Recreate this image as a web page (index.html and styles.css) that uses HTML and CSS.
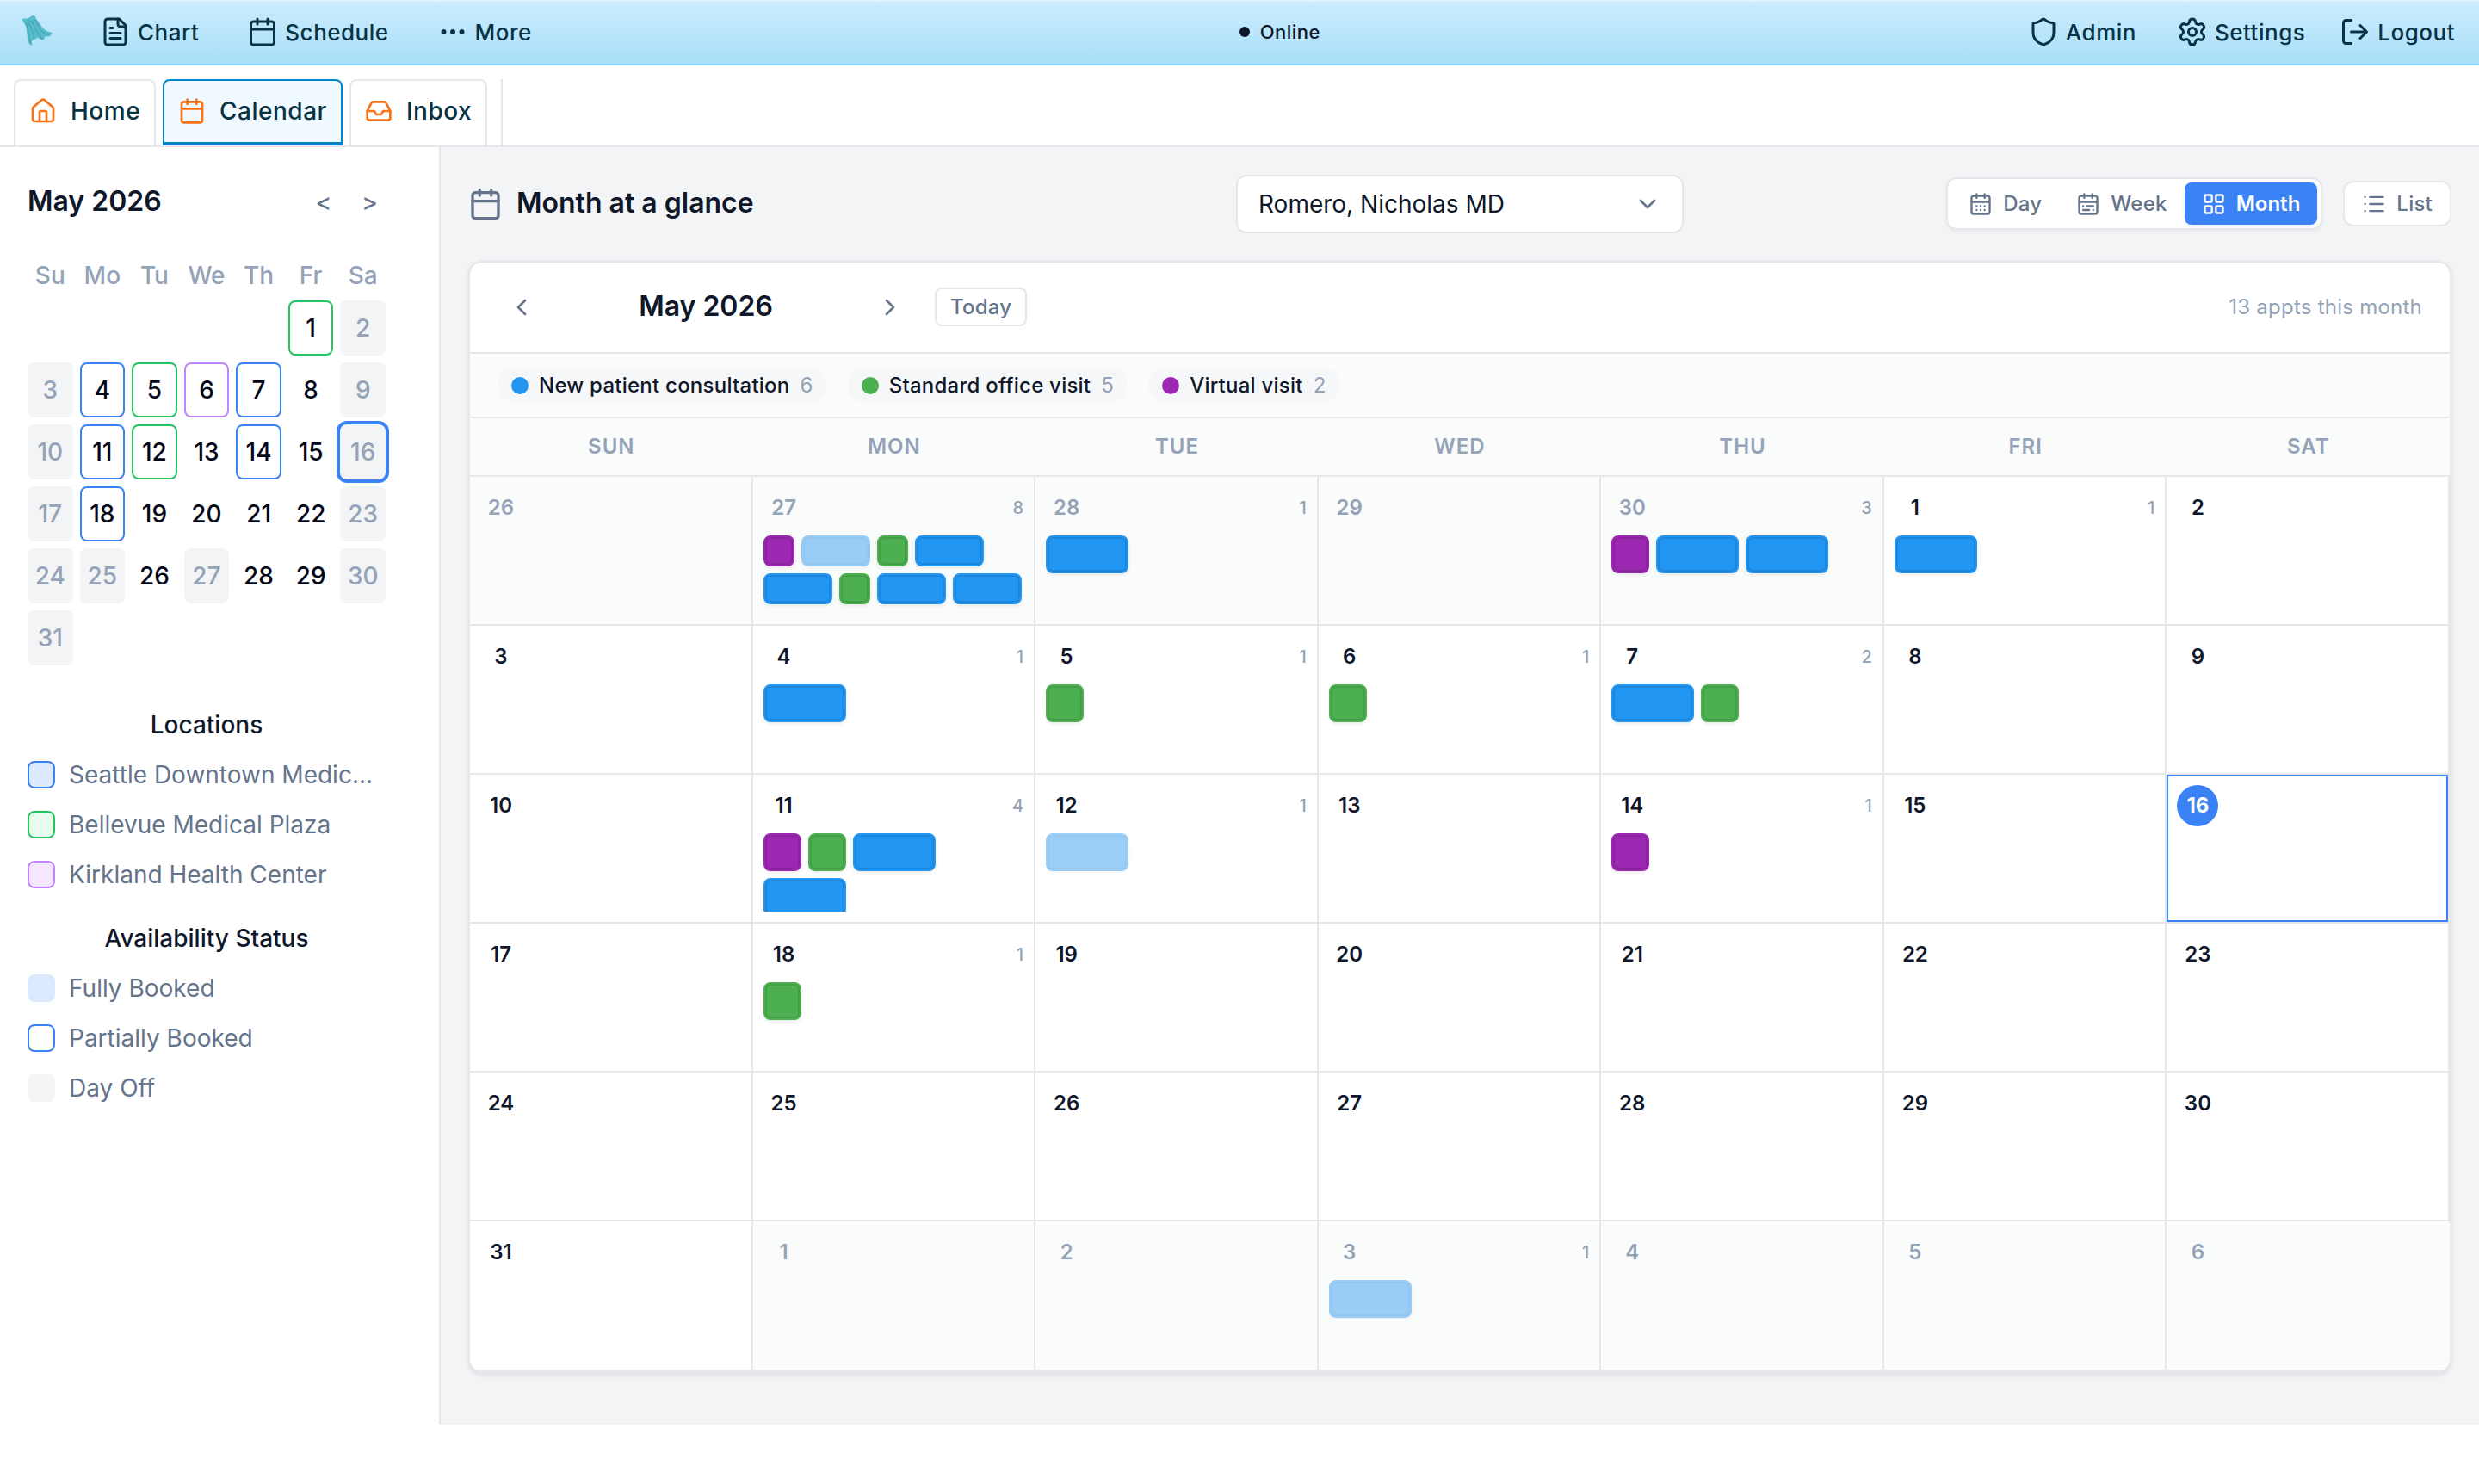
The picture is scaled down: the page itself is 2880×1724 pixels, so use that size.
FILE: index.html
```html
<!DOCTYPE html>
<html lang="en">
<head>
    <meta charset="UTF-8">
    <meta name="viewport" content="width=device-width, initial-scale=1.0">
    <title>Calendar</title>
    <link rel="stylesheet" href="styles.css">
</head>
<body>
    <!-- Shared icons -->
    <svg width="0" height="0" class="sprite">
        <symbol id="calendar" viewBox="0 0 24 24"><path d="M8 2v4M16 2v4M3 10h18"/><rect x="3" y="4" width="18" height="18" rx="2"/></symbol>
        <symbol id="file" viewBox="0 0 24 24"><path d="M15 2H6a2 2 0 0 0-2 2v16a2 2 0 0 0 2 2h12a2 2 0 0 0 2-2V7Z"/><path d="M14 2v4a2 2 0 0 0 2 2h4M10 9H8M16 13H8M16 17H8"/></symbol>
        <symbol id="dots" viewBox="0 0 24 24"><circle cx="12" cy="12" r="1"/><circle cx="19" cy="12" r="1"/><circle cx="5" cy="12" r="1"/></symbol>
        <symbol id="shield" viewBox="0 0 24 24"><path d="M20 13c0 5-3.500 7.500-7.660 8.950a1 1 0 0 1-.67-.01C7.500 20.500 4 18 4 13V6a1 1 0 0 1 1-1c2 0 4.500-1.200 6.240-2.720a1.170 1.170 0 0 1 1.520 0C14.510 3.810 17 5 19 5a1 1 0 0 1 1 1z"/></symbol>
        <symbol id="settings" viewBox="0 0 24 24"><path d="M9.671 4.136a2.340 2.340 0 0 1 4.659 0 2.340 2.340 0 0 0 3.319 1.915 2.340 2.340 0 0 1 2.330 4.033 2.340 2.340 0 0 0 0 3.831 2.340 2.340 0 0 1-2.330 4.033 2.340 2.340 0 0 0-3.319 1.915 2.340 2.340 0 0 1-4.659 0 2.340 2.340 0 0 0-3.320-1.915 2.340 2.340 0 0 1-2.330-4.033 2.340 2.340 0 0 0 0-3.831A2.340 2.340 0 0 1 6.350 6.051a2.340 2.340 0 0 0 3.319-1.915"/><circle cx="12" cy="12" r="3"/></symbol>
        <symbol id="logout" viewBox="0 0 24 24"><path d="M9 21H5a2 2 0 0 1-2-2V5a2 2 0 0 1 2-2h4M16 17l5-5-5-5M21 12H9"/></symbol>
        <symbol id="home" viewBox="0 0 24 24"><path d="M15 21v-8a1 1 0 0 0-1-1h-4a1 1 0 0 0-1 1v8"/><path d="M3 10a2 2 0 0 1 .709-1.528l7-5.999a2 2 0 0 1 2.582 0l7 5.999A2 2 0 0 1 21 10v9a2 2 0 0 1-2 2H5a2 2 0 0 1-2-2z"/></symbol>
        <symbol id="inbox" viewBox="0 0 24 24"><path d="M22 12h-6l-2 3h-4l-2-3H2"/><path d="M5.450 5.110 2 12v6a2 2 0 0 0 2 2h16a2 2 0 0 0 2-2v-6l-3.450-6.890A2 2 0 0 0 16.760 4H7.240a2 2 0 0 0-1.790 1.110z"/></symbol>
        <symbol id="day" viewBox="0 0 24 24"><path d="M8 2v4M16 2v4M3 10h18M8 14h.01M12 14h.01M16 14h.01M8 18h.01M12 18h.01M16 18h.01"/><rect x="3" y="4" width="18" height="18" rx="2"/></symbol>
        <symbol id="week" viewBox="0 0 24 24"><path d="M8 2v4M16 2v4M3 10h18M17 14h-6M13 18H7M7 14h.01M17 18h.01"/><rect x="3" y="4" width="18" height="18" rx="2"/></symbol>
        <symbol id="grid" viewBox="0 0 24 24"><rect x="3" y="3" width="7" height="7" rx="1"/><rect x="14" y="3" width="7" height="7" rx="1"/><rect x="14" y="14" width="7" height="7" rx="1"/><rect x="3" y="14" width="7" height="7" rx="1"/></symbol>
        <symbol id="list" viewBox="0 0 24 24"><path d="M3 5h.01M3 12h.01M3 19h.01M8 5h13M8 12h13M8 19h13"/></symbol>
        <symbol id="left" viewBox="0 0 24 24"><path d="m15 18-6-6 6-6"/></symbol>
        <symbol id="right" viewBox="0 0 24 24"><path d="m9 18 6-6-6-6"/></symbol>
        <symbol id="down" viewBox="0 0 24 24"><path d="m6 9 6 6 6-6"/></symbol>
    </svg>

    <div class="topbar">
        <div class="nav">
            <svg class="logo" viewBox="0 0 40 40">
                <path d="M1.500 4.500C3 3 5 4 7 3.500c3 0 5-3 8-3.500 2 0 3 2 3.500 4 2 2 3.500 4.500 5.500 7.500 2 3 4 5 6.500 6.500 2 1.500 5 2 7.500 2.500-1 2-2.500 4-4.500 5l-4-1c-.5 2-1.500 4-3.500 5-2-.5-4-2-6-3-1 1-2 2-3.500 2-2 0-3 1.500-3.500 3.500l1 4c-2-.5-4-2-5.500-5C8 25 7.500 18 6 13 5 10 3 8 1.500 4.500z" fill="#58bccb"/>
                <path d="M8 5c3 3 7 3 10 0M6 8c4 7 3 15 6 26M9 8c5 7 5 12 7 19M14 8c3 8 6 14 12 20M18 7c3 7 8 13 14 17" fill="none" stroke="#45a5b6" stroke-width="1.200"/>
            </svg>
            <a class="nav-item"><svg class="icon"><use href="#file"/></svg>Chart</a>
            <a class="nav-item"><svg class="icon"><use href="#calendar"/></svg>Schedule</a>
            <a class="nav-item"><svg class="icon"><use href="#dots"/></svg>More</a>
        </div>
        <div class="online"><span class="online-dot"></span>Online</div>
        <div class="nav nav-right">
            <a class="nav-item admin"><svg class="icon"><use href="#shield"/></svg>Admin</a>
            <a class="nav-item"><svg class="icon"><use href="#settings"/></svg>Settings</a>
            <a class="nav-item"><svg class="icon"><use href="#logout"/></svg>Logout</a>
        </div>
    </div>

    <div class="tabs">
        <a class="tab"><svg class="icon"><use href="#home"/></svg><span>Home</span></a>
        <a class="tab active"><svg class="icon"><use href="#calendar"/></svg><span>Calendar</span></a>
        <a class="tab"><svg class="icon"><use href="#inbox"/></svg><span>Inbox</span></a>
        <span class="tab-divider"></span>
    </div>

    <div class="layout">
        <div class="sidebar">
            <div class="mini-header">
                <h2>May 2026</h2>
                <div class="mini-nav"><span>&lt;</span><span>&gt;</span></div>
            </div>
            <div class="mini-week">
                <span>Su</span><span>Mo</span><span>Tu</span><span>We</span><span>Th</span><span>Fr</span><span>Sa</span>
            </div>
            <div class="mini-days" id="miniDays"></div>

            <h3>Locations</h3>
            <div class="key"><span class="swatch seattle"></span><span class="key-name">Seattle Downtown Medic...</span></div>
            <div class="key"><span class="swatch bellevue"></span><span class="key-name">Bellevue Medical Plaza</span></div>
            <div class="key"><span class="swatch kirkland"></span><span class="key-name">Kirkland Health Center</span></div>
            <h3 class="status-title">Availability Status</h3>
            <div class="key"><span class="swatch full"></span><span class="key-name">Fully Booked</span></div>
            <div class="key"><span class="swatch partial"></span><span class="key-name">Partially Booked</span></div>
            <div class="key"><span class="swatch off"></span><span class="key-name">Day Off</span></div>
        </div>

        <div class="main">
            <div class="toolbar">
                <h1><svg class="icon"><use href="#calendar"/></svg><span>Month at a glance</span></h1>
                <div class="provider">Romero, Nicholas MD<svg class="icon"><use href="#down"/></svg></div>
                <div class="views">
                    <div class="view-group">
                        <button class="view"><svg class="icon"><use href="#day"/></svg>Day</button>
                        <button class="view"><svg class="icon"><use href="#week"/></svg>Week</button>
                        <button class="view selected"><svg class="icon"><use href="#grid"/></svg>Month</button>
                    </div>
                    <button class="view list"><svg class="icon"><use href="#list"/></svg>List</button>
                </div>
            </div>

            <div class="card">
                <div class="card-header">
                    <button class="arrow"><svg class="icon"><use href="#left"/></svg></button>
                    <div class="month-name">May 2026</div>
                    <button class="arrow"><svg class="icon"><use href="#right"/></svg></button>
                    <button class="today-button">Today</button>
                    <span class="total">13 appts this month</span>
                </div>
                <div class="legend">
                    <span class="chip"><i class="dot new"></i>New patient consultation<b>6</b></span>
                    <span class="chip"><i class="dot standard"></i>Standard office visit<b>5</b></span>
                    <span class="chip"><i class="dot virtual"></i>Virtual visit<b>2</b></span>
                </div>
                <div class="weekdays">
                    <span>Sun</span><span>Mon</span><span>Tue</span><span>Wed</span><span>Thu</span><span>Fri</span><span>Sat</span>
                </div>
                <div class="month" id="month"></div>
            </div>
        </div>
    </div>

    <script>
        // Small calendar: May 1 is a Friday
        const miniStyles = {
            1: 'bellevue', 4: 'seattle', 5: 'bellevue', 6: 'kirkland', 7: 'seattle',
            11: 'seattle', 12: 'bellevue', 14: 'seattle', 18: 'seattle', 25: 'off', 27: 'off'
        };
        let mini = '';
        for (let d = 1; d <= 31; d++) {
            const weekday = (d + 4) % 7;
            let cls = miniStyles[d] || (weekday === 0 || weekday === 6 ? 'off' : '');
            if (d === 16) cls += ' current';
            mini += `<span class="mini-day ${cls}">${d}</span>`;
        }
        document.getElementById('miniDays').innerHTML = mini;

        // Appointments by cell, first cell is April 26
        // n = new patient, s = standard, v = virtual, f = faded new patient
        const appts = {
            1: 'vfsnnsnn', 2: 'n', 4: 'vnn', 5: 'n',
            8: 'n', 9: 's', 10: 's', 11: 'ns',
            15: 'vsnn', 16: 'f', 18: 'v', 22: 's', 38: 'f'
        };
        const types = { n: 'new wide', s: 'standard', v: 'virtual', f: 'new wide faded' };
        let month = '';
        for (let i = 0; i < 42; i++) {
            const day = new Date(2026, 3, 26 + i);
            const list = appts[i] || '';
            let cls = 'cell';
            if (day.getMonth() !== 4) cls += ' other';
            if (i === 20) cls += ' today';
            if (list.length > 4) cls += ' dense';
            month += `<div class="${cls}">
                <div class="cell-head"><span class="date">${day.getDate()}</span>${list ? `<span class="count">${list.length}</span>` : ''}</div>
                <div class="appts">${[...list].map(t => `<span class="appt ${types[t]}"></span>`).join('')}</div>
            </div>`;
        }
        document.getElementById('month').innerHTML = month;
    </script>
</body>
</html>
```
FILE: styles.css
```css
* {
    box-sizing: border-box;
}
body {
    margin: 0;
    font-family: Inter, "Liberation Sans", sans-serif;
    font-size: 28px;
    color: #0f172a;
    background-color: #fff;
}
h1, h2, h3 {
    margin: 0;
}
button {
    font-family: inherit;
    background: none;
    border: none;
    padding: 0;
    color: #64748b;
}
.sprite {
    position: absolute;
}
.icon {
    width: 32px;
    height: 32px;
    flex-shrink: 0;
    fill: none;
    stroke: currentColor;
    stroke-width: 2;
    stroke-linecap: round;
    stroke-linejoin: round;
}

/* Top bar */
.topbar {
    height: 76px;
    display: flex;
    justify-content: space-between;
    align-items: center;
    padding: 0 28px 0 24px;
    background: linear-gradient(#cdecff, #a8dff8);
    border-bottom: 2px solid #8fd6f9;
    box-shadow: inset 0 2px 0 #e0f4ff;
    color: #083344;
}
.nav {
    display: flex;
    align-items: center;
    gap: 56px;
}
.nav-right {
    gap: 40px;
}
.admin {
    margin-right: 7px;
}
.logo {
    width: 39px;
    height: 39px;
    margin-right: -3px;
}
.nav-item {
    display: flex;
    align-items: center;
    gap: 8px;
    font-size: 26px;
    font-weight: 500;
    letter-spacing: 0.5px;
}
.nav-item .icon {
    width: 36px;
    height: 36px;
}
.online {
    display: flex;
    align-items: center;
    gap: 12px;
    font-size: 22px;
    font-weight: 500;
    letter-spacing: 0.5px;
    color: #0f172a;
}
.online-dot {
    width: 12px;
    height: 12px;
    border-radius: 50%;
    background-color: #0f172a;
}

/* Tabs */
.tabs {
    height: 95px;
    display: flex;
    gap: 8px;
    padding: 16px 16px 0;
    border-bottom: 2px solid #e5e7eb;
}
.tab {
    display: flex;
    align-items: center;
    gap: 16px;
    height: 77px;
    padding: 0 16px 5px;
    border: 2px solid #e5e7eb;
    border-bottom: none;
    border-radius: 8px 8px 0 0;
    font-weight: 500;
    letter-spacing: 0.5px;
    color: #083344;
}
.tab span {
    padding-bottom: 1px;
}
.tab .icon {
    color: #f97316;
}
.tab.active {
    background-color: #f0f9ff;
    border: 2px solid #0284c7;
    border-bottom-width: 4px;
    padding-bottom: 1px;
}
.tab-divider {
    width: 2px;
    margin-left: 8px;
    background-color: #e5e7eb;
}

/* Sidebar */
.layout {
    display: flex;
    height: 1484px;
}
.sidebar {
    width: 512px;
    flex-shrink: 0;
    padding: 32px 62px 0 32px;
    border-right: 2px solid #e5e7eb;
}
.mini-header {
    display: flex;
    justify-content: space-between;
    align-items: center;
    height: 64px;
}
.mini-header h2 {
    padding-bottom: 4px;
    font-size: 32px;
    font-weight: 600;
}
.mini-nav {
    display: flex;
    gap: 35px;
    padding-right: 9px;
    color: #64748b;
    font-weight: 500;
}
.mini-week {
    display: grid;
    grid-template-columns: repeat(7, 1fr);
    column-gap: 8px;
    height: 82px;
    padding-top: 36px;
    text-align: center;
    font-weight: 500;
    color: #94a3b8;
}
.mini-days {
    display: grid;
    grid-template-columns: repeat(7, 1fr);
    grid-auto-rows: 64px;
    gap: 8px;
    margin-bottom: 49px;
}
.mini-day {
    display: flex;
    align-items: center;
    justify-content: center;
    border: 2px solid transparent;
    border-radius: 8px;
    font-weight: 500;
    color: #020617;
}
.mini-day:first-child {
    grid-column: 6;
}
.mini-day.seattle {
    border-color: #3b82f6;
}
.mini-day.bellevue {
    border-color: #22c55e;
}
.mini-day.kirkland {
    border-color: #c084fc;
}
.mini-day.off {
    background-color: #f3f4f6;
    border-color: #f3f4f6;
    color: #94a3b8;
}
.mini-day.current {
    box-shadow: 0 0 0 4px #3b82f6;
}
.sidebar h3 {
    height: 40px;
    margin-bottom: 17px;
    line-height: 40px;
    text-align: center;
    font-size: 28px;
    font-weight: 500;
}
.sidebar .status-title {
    margin-top: 33px;
}
.key {
    display: flex;
    align-items: center;
    gap: 16px;
    height: 42px;
    margin-bottom: 16px;
    color: #64748b;
}
.key-name {
    white-space: nowrap;
}
.swatch {
    width: 32px;
    height: 32px;
    border: 2px solid #3b82f6;
    border-radius: 8px;
}
.swatch.seattle {
    background-color: #dbeafe;
}
.swatch.bellevue {
    background-color: #e7fcef;
    border-color: #22c55e;
}
.swatch.kirkland {
    background-color: #f3e8ff;
    border-color: #c084fc;
}
.swatch.full {
    background-color: #dbeafe;
    border-color: #dbeafe;
}
.swatch.off {
    background-color: #f3f4f6;
    border-color: #f3f4f6;
}

/* Main toolbar */
.main {
    flex: 1;
    padding: 32px;
    background-color: #f3f4f6;
}
.toolbar {
    display: grid;
    grid-template-columns: 1fr 520px 1fr;
    align-items: center;
    height: 68px;
    margin-bottom: 32px;
}
.toolbar h1 {
    display: flex;
    align-items: center;
    gap: 16px;
    margin-top: -1px;
    font-size: 32px;
    font-weight: 600;
}
.toolbar h1 span {
    padding-bottom: 2px;
}
.toolbar h1 .icon {
    width: 40px;
    height: 40px;
    color: #64748b;
}
.provider {
    display: flex;
    align-items: center;
    justify-content: space-between;
    height: 68px;
    padding: 0 24px;
    border: 2px solid #e5e7eb;
    border-radius: 12px;
    background-color: #fff;
    font-weight: 400;
}
.provider .icon {
    color: #64748b;
}
.views {
    display: flex;
    align-items: center;
    justify-content: flex-end;
    gap: 24px;
    margin-top: -1px;
}
.view-group {
    display: flex;
    padding: 4px;
    border: 2px solid #e5e7eb;
    border-radius: 12px;
    background-color: #fff;
    box-shadow: 0 2px 4px rgba(0, 0, 0, 0.05);
}
.view {
    display: flex;
    align-items: center;
    gap: 12px;
    height: 49px;
    padding: 0 20px;
    border-radius: 8px;
    font-size: 24px;
    font-weight: 500;
    letter-spacing: 0.24px;
}
.view .icon {
    width: 28px;
    height: 28px;
}
.view.selected {
    background-color: #3b82f6;
    color: #fff;
    font-weight: 600;
    letter-spacing: 0;
    box-shadow: 0 2px 4px rgba(0, 0, 0, 0.08);
}
.view.list {
    height: 53px;
    border: 2px solid #e5e7eb;
    border-radius: 12px;
    background-color: #fff;
}

/* Month card */
.card {
    border: 2px solid #e5e7eb;
    border-radius: 16px;
    background-color: #fff;
    box-shadow: 0 2px 6px rgba(0, 0, 0, 0.1);
    overflow: hidden;
}
.card-header {
    display: flex;
    align-items: center;
    height: 106px;
    padding: 0 32px;
    border-bottom: 2px solid #e5e7eb;
}
.arrow {
    display: flex;
    padding: 12px;
}
.month-name {
    width: 372px;
    padding-bottom: 3px;
    text-align: center;
    font-size: 32px;
    font-weight: 600;
}
.today-button {
    height: 45px;
    margin: 0 0 1px 24px;
    padding: 0 16px;
    border: 2px solid #e5e7eb;
    border-radius: 8px;
    font-size: 24px;
    font-weight: 500;
    letter-spacing: 0.24px;
}
.total {
    margin-left: auto;
    padding-bottom: 2px;
    font-size: 24px;
    letter-spacing: 0.24px;
    color: #94a3b8;
}
.legend {
    display: flex;
    align-items: center;
    gap: 24px;
    height: 75px;
    padding: 0 32px;
    border-bottom: 2px solid #e5e7eb;
    background-color: #fafcfb;
}
.chip {
    display: flex;
    align-items: center;
    gap: 12px;
    height: 41px;
    padding: 0 16px;
    border-radius: 21px;
    background-color: #f6f7f9;
    font-size: 24px;
    font-weight: 500;
    letter-spacing: 0.24px;
}
.chip b {
    font-weight: 400;
    color: #94a3b8;
}
.dot {
    width: 20px;
    height: 20px;
    border-radius: 50%;
}
.new {
    background-color: #2196f3;
    border-color: #2196f3;
}
.standard {
    background-color: #4caf50;
    border-color: #4caf50;
}
.virtual {
    background-color: #9c27b0;
    border-color: #9c27b0;
}
.weekdays {
    display: grid;
    grid-template-columns: repeat(7, 1fr);
    height: 68px;
    line-height: 66px;
    border-bottom: 2px solid #e5e7eb;
    background-color: #fafcfb;
    text-align: center;
    text-transform: uppercase;
    font-size: 24px;
    font-weight: 600;
    letter-spacing: 1px;
    color: #94a3b8;
}
.month {
    display: grid;
    grid-template-columns: repeat(7, 1fr);
    grid-template-rows: repeat(5, 173px) 1fr;
    height: 1039px;
}
.cell {
    display: flex;
    flex-direction: column;
    gap: 8px;
    min-height: 0;
    padding: 12px;
    border-right: 2px solid #e5e7eb;
    border-bottom: 2px solid #e5e7eb;
}
.cell:last-child {
    border-right: none;
}
.cell.other {
    background-color: #fafcfb;
}
.cell.today {
    box-shadow: inset 0 0 0 2px #3b82f6;
}
.cell-head {
    display: flex;
    justify-content: space-between;
    align-items: center;
}
.date {
    width: 48px;
    height: 48px;
    line-height: 48px;
    border-radius: 50%;
    text-align: center;
    font-size: 24px;
    font-weight: 600;
}
.other .date {
    color: #94a3b8;
}
.today .date {
    background-color: #3b82f6;
    color: #fff;
    font-weight: 700;
}
.count {
    font-size: 20px;
    font-weight: 500;
    color: #94a3b8;
}
.appts {
    display: flex;
    flex-wrap: wrap;
    align-content: flex-start;
    gap: 8px;
    flex: 1;
    min-height: 0;
    overflow: hidden;
}
.appt {
    width: 44px;
    height: 44px;
    border-width: 2px;
    border-style: solid;
    border-radius: 8px;
    box-shadow: inset 0 0 0 2px rgba(0, 0, 0, 0.1), 0 2px 4px rgba(0, 0, 0, 0.08);
}
.appt.wide {
    width: 96px;
}
.dense .appt {
    width: 36px;
    height: 36px;
}
.dense .appt.wide {
    width: 80px;
}
.appt.faded {
    opacity: 0.45;
}
```
